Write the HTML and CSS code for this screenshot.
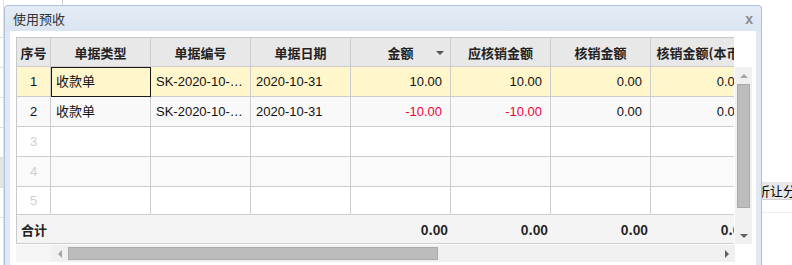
FILE: index.html
```html
<!DOCTYPE html>
<html lang="zh-CN">

<head>
    <meta charset="UTF-8">
    <meta name="viewport" content="width=device-width, initial-scale=1.0">
    <title>使用预收</title>
    <link rel="stylesheet" href="styles.css">
</head>

<body>
    <div class="page">
        <div class="side">
            <div class="side-row"></div>
            <div class="side-row"></div>
            <div class="side-row"></div>
            <div class="side-row"></div>
            <div class="side-row"></div>
            <div class="side-row side-active"></div>
            <div class="side-row"></div>
        </div>
        <div class="main">
            <div class="main-head">
                <div class="head-cell"></div>
            </div>
            <div class="toolbar">
                <button class="tool-btn">折让分配</button>
            </div>
            <div class="main-line"></div>
        </div>
    </div>

    <div class="dialog">
        <div class="dialog-title">
            <span>使用预收</span>
            <span class="dialog-close">x</span>
        </div>
        <div class="dialog-body">
            <div class="grid">
                <div class="grid-view">
                    <div class="row row-head">
                        <div class="cell">序号</div>
                        <div class="cell">单据类型</div>
                        <div class="cell">单据编号</div>
                        <div class="cell">单据日期</div>
                        <div class="cell sortable">金额<span class="sort-arrow"></span></div>
                        <div class="cell">应核销金额</div>
                        <div class="cell">核销金额</div>
                        <div class="cell">核销金额(本币)</div>
                    </div>
                    <div class="row row-selected">
                        <div class="cell num">1</div>
                        <div class="cell text current">收款单</div>
                        <div class="cell text">SK-2020-10-0001</div>
                        <div class="cell text">2020-10-31</div>
                        <div class="cell money">10.00</div>
                        <div class="cell money">10.00</div>
                        <div class="cell money">0.00</div>
                        <div class="cell money">0.00</div>
                    </div>
                    <div class="row row-alt">
                        <div class="cell num">2</div>
                        <div class="cell text">收款单</div>
                        <div class="cell text">SK-2020-10-0002</div>
                        <div class="cell text">2020-10-31</div>
                        <div class="cell money negative">-10.00</div>
                        <div class="cell money negative">-10.00</div>
                        <div class="cell money">0.00</div>
                        <div class="cell money">0.00</div>
                    </div>
                    <div class="row">
                        <div class="cell num empty">3</div>
                        <div class="cell"></div><div class="cell"></div><div class="cell"></div><div class="cell"></div>
                        <div class="cell"></div><div class="cell"></div><div class="cell"></div>
                    </div>
                    <div class="row row-alt2">
                        <div class="cell num empty">4</div>
                        <div class="cell"></div><div class="cell"></div><div class="cell"></div><div class="cell"></div>
                        <div class="cell"></div><div class="cell"></div><div class="cell"></div>
                    </div>
                    <div class="row row-last">
                        <div class="cell num empty">5</div>
                        <div class="cell"></div><div class="cell"></div><div class="cell"></div><div class="cell"></div>
                        <div class="cell"></div><div class="cell"></div><div class="cell"></div>
                    </div>
                    <div class="row row-foot">
                        <div class="cell foot-label">合计</div>
                        <div class="cell"></div>
                        <div class="cell"></div>
                        <div class="cell"></div>
                        <div class="cell money">0.00</div>
                        <div class="cell money">0.00</div>
                        <div class="cell money">0.00</div>
                        <div class="cell money">0.00</div>
                    </div>
                </div>
                <div class="vscroll">
                    <div class="arrow-box"><span class="arrow arrow-up"></span></div>
                    <div class="vthumb"></div>
                    <div class="vspace"></div>
                    <div class="arrow-box"><span class="arrow arrow-down"></span></div>
                </div>
            </div>
            <div class="hscroll-row">
                <div class="hscroll-frozen"></div>
                <div class="hscroll">
                    <div class="arrow-box h"><span class="arrow arrow-left"></span></div>
                    <div class="hthumb"></div>
                    <div class="hspace"></div>
                    <div class="arrow-box h"><span class="arrow arrow-right"></span></div>
                </div>
            </div>
        </div>
    </div>
</body>

</html>
```

FILE: styles.css
```css
body {
    margin: 0;
    width: 792px;
    height: 265px;
    overflow: hidden;
    position: relative;
    background: #fff;
    font-family: "Liberation Sans", "Noto Sans CJK SC", sans-serif;
    font-size: 13px;
    color: #111;
}

/* page behind the dialog */
.page {
    display: flex;
    height: 265px;
}

.side {
    width: 3px;
    border-right: 1px solid #d5e1ee;
    padding-top: 8px;
}

.side-row {
    height: 29px;
    border-bottom: 1px solid #dcdcdc;
}

.side-active {
    background: #e4e4e4;
}

.main {
    flex: 1;
}

.main-head {
    height: 5px;
    display: flex;
}

.head-cell {
    width: 58px;
    border-right: 1px solid #d0d0d0;
}

.toolbar {
    margin-top: 177px;
    display: flex;
    justify-content: flex-end;
}

.tool-btn {
    width: 40px;
    height: 18px;
    padding: 0 0 0 5px;
    border: none;
    border-bottom: 1px solid #d0d0d0;
    background: #e8e8e8;
    font-family: "Noto Sans CJK SC", sans-serif;
    font-size: 13px;
    color: #000;
    text-align: left;
    white-space: nowrap;
    overflow: hidden;
    line-height: 18px;
}

.main-line {
    margin-top: 12px;
    height: 1px;
    background: #ececec;
}

/* dialog */
.dialog {
    position: absolute;
    left: 4px;
    top: 5px;
    width: 758px;
    height: 260px;
    box-sizing: border-box;
    border: 1px solid #aec3d9;
    border-bottom: none;
    border-radius: 4px 4px 0 0;
    background: #dfe8f3;
    overflow: hidden;
}

.dialog-title {
    height: 25px;
    display: flex;
    justify-content: space-between;
    align-items: center;
    padding: 0 8px;
    background: linear-gradient(#e4ecf6, #dae5f1);
    border-radius: 4px 4px 0 0;
    font-family: "Noto Sans CJK SC", sans-serif;
    font-size: 13px;
    color: #333;
}

.dialog-close {
    font-family: "Liberation Sans", sans-serif;
    font-size: 14px;
    font-weight: bold;
    color: #8a8a8a;
}

.dialog-body {
    margin: 0 5px;
    height: 234px;
    padding: 6px 4px 0 6px;
    background: #fff;
}

.grid {
    display: flex;
    align-items: flex-start;
}

.grid-view {
    width: 718px;
    border-left: 1px solid #c8c8c8;
    border-top: 1px solid #c8c8c8;
    overflow: hidden;
}

.row {
    display: grid;
    grid-template-columns: 34px repeat(7, 100px);
    height: 30px;
    background: #fff;
}

.cell {
    box-sizing: border-box;
    border-right: 1px solid #cdcdcd;
    border-bottom: 1px solid #cdcdcd;
    display: flex;
    align-items: center;
    white-space: nowrap;
    overflow: hidden;
}

.row-head {
    height: 29px;
    background: #e8e8e8;
}

.row-head .cell {
    justify-content: center;
    font-family: "Noto Sans CJK SC", sans-serif;
    font-weight: bold;
    color: #222;
    position: relative;
}

.sort-arrow {
    position: absolute;
    right: 6px;
    top: 13px;
    border-left: 4px solid transparent;
    border-right: 4px solid transparent;
    border-top: 4px solid #555;
}

.row-selected {
    background: #fff6cb;
}

.row-alt {
    background: #f9f9f9;
}

.row-alt2 {
    background: #fafafa;
}

.row-last {
    height: 28px;
}

.num {
    justify-content: center;
}

.empty {
    color: #cfcfcf;
}

.text {
    padding: 0 6px 0 5px;
    display: block;
    line-height: 29px;
    text-overflow: ellipsis;
}

.current {
    outline: 1px solid #1a1a1a;
    outline-offset: -1px;
}

.money {
    justify-content: flex-end;
    padding-right: 8px;
}

.negative {
    color: #f5003a;
}

.row-foot {
    height: 29px;
    background: #f4f4f4;
    border-bottom: 1px solid #cdcdcd;
    box-sizing: border-box;
}

.row-foot .cell {
    border: none;
    font-weight: bold;
    font-family: "Noto Sans CJK SC", sans-serif;
    color: #222;
}

.row-foot .money {
    padding-right: 3px;
}

.foot-label {
    padding-left: 4px;
}

/* scrollbars */
.vscroll {
    width: 17px;
    height: 177px;
    margin-top: 30px;
    margin-left: 1px;
    background: #f0f0f0;
    display: flex;
    flex-direction: column;
}

.arrow-box {
    height: 17px;
    display: flex;
    align-items: center;
    justify-content: center;
}

.arrow-box.h {
    width: 17px;
    height: 17px;
}

.arrow {
    width: 0;
    height: 0;
}

.arrow-up {
    border-left: 4px solid transparent;
    border-right: 4px solid transparent;
    border-bottom: 4px solid #a3a3a3;
}

.arrow-down {
    border-left: 4px solid transparent;
    border-right: 4px solid transparent;
    border-top: 4px solid #606060;
}

.arrow-left {
    border-top: 4px solid transparent;
    border-bottom: 4px solid transparent;
    border-right: 4px solid #a3a3a3;
}

.arrow-right {
    border-top: 4px solid transparent;
    border-bottom: 4px solid transparent;
    border-left: 4px solid #606060;
}

.vthumb {
    margin: 0 2px;
    height: 122px;
    background: #bcbcbc;
    border: 1px solid #ababab;
}

.vspace {
    flex: 1;
}

.hscroll-row {
    display: flex;
    height: 17px;
    margin-top: 1px;
}

.hscroll-frozen {
    width: 35px;
    background: #f5f5f5;
}

.hscroll {
    width: 684px;
    display: flex;
    align-items: center;
    background: #f0f0f0;
}

.hthumb {
    width: 368px;
    height: 11px;
    background: #bcbcbc;
    border: 1px solid #ababab;
}

.hspace {
    flex: 1;
}
```
